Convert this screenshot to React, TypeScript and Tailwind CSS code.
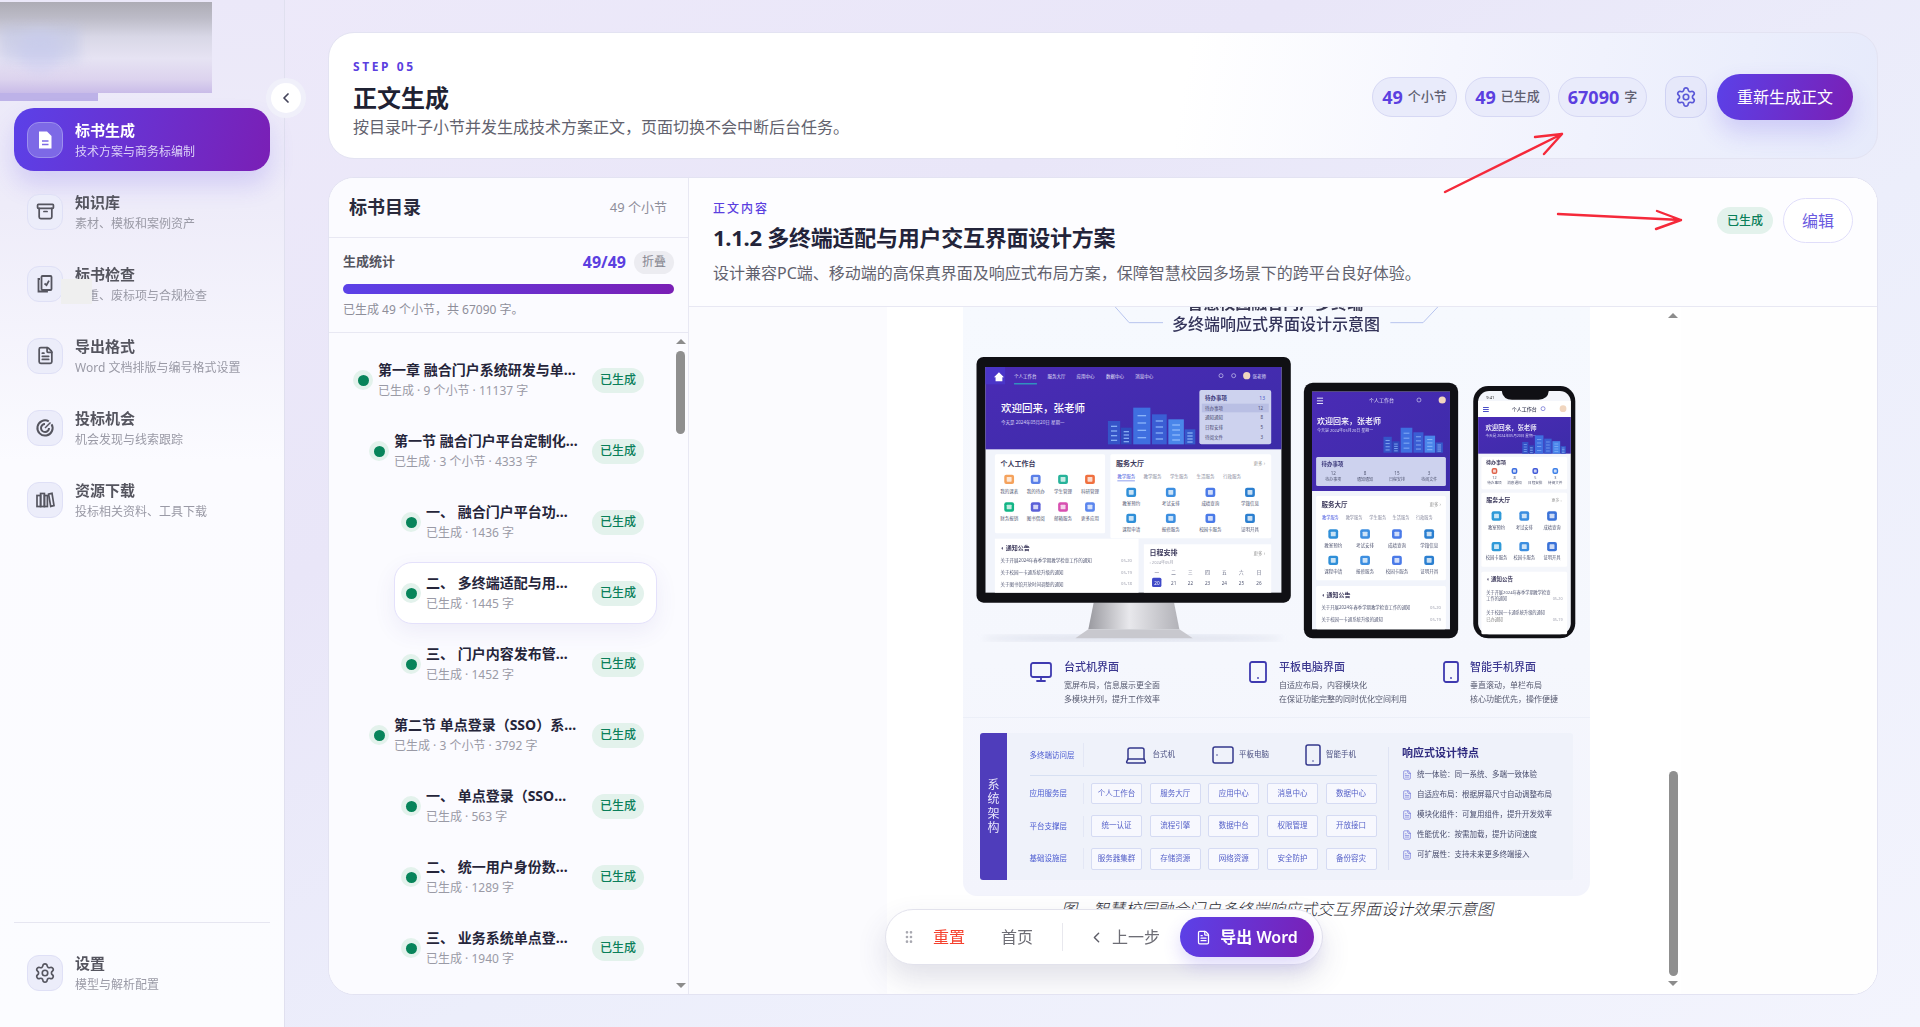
import React from "react";
import { Archive, ChevronLeft, GripVertical, Settings, FileText, Monitor, Tablet, Smartphone, Laptop } from "lucide-react";

const X = (z: number) => 960 + z / 2.45;
const Y = (z: number) => 300 + z / 3;

function R({ x, y, x2, y2, f, r = 0, o, s }: { x: number; y: number; x2: number; y2: number; f: string; r?: number; o?: number; s?: string }) {
  return <rect x={X(x)} y={Y(y)} width={(x2 - x) / 2.45} height={(y2 - y) / 3} rx={r} fill={f} opacity={o} stroke={s} strokeWidth={s ? 0.5 : undefined} />;
}
function T({ x, y, s, f = "#555a75", w, a = "start", children }: { x: number; y: number; s: number; f?: string; w?: number; a?: "start" | "middle" | "end"; children: React.ReactNode }) {
  return (
    <text x={X(x)} y={Y(y)} fontSize={s} fill={f} fontWeight={w} textAnchor={a} dominantBaseline="central">
      {children}
    </text>
  );
}
function Ico({ x, y, c, w = 24, h = 26 }: { x: number; y: number; c: string; w?: number; h?: number }) {
  return (
    <g>
      <R x={x - w / 2} y={y - h / 2} x2={x + w / 2} y2={y + h / 2} f={c} r={2} />
      <R x={x - w / 4} y={y - h / 4} x2={x + w / 4} y2={y + h / 4} f="#fff" o={0.75} r={0.6} />
    </g>
  );
}
function City({ x, y, k = 1 }: { x: number; y: number; k?: number }) {
  const b: [number, number, number, string][] = [
    [0, 70, 30, "#3554c8"], [32, 50, 26, "#2f49bd"], [62, 110, 42, "#3f6fe0"], [108, 90, 36, "#3a5ed4"], [148, 75, 38, "#4a86ea"], [188, 45, 26, "#3559cb"],
  ];
  return (
    <g>
      {b.map(([dx, h, w, c], i) => (
        <R key={i} x={x + dx * k} y={y - h * k} x2={x + (dx + w) * k} y2={y} f={c} />
      ))}
      {b.map(([dx, h, w], i) =>
        [0.2, 0.4, 0.6, 0.8].map((t) => <R key={`${i}-${t}`} x={x + (dx + w * 0.25) * k} y={y - h * k * t} x2={x + (dx + w * 0.75) * k} y2={y - h * k * t + 4 * k} f="#9cc4ff" o={0.8} />),
      )}
    </g>
  );
}

function Devices() {
  const H = "#3d3a5c";
  const mcols = [118, 183, 250, 316];
  const icons1 = [["#f5a25c", "#5a7fe8", "#27b39a", "#f0703f"], ["#12b585", "#5b60d8", "#d850b0", "#5b86ee"]];
  const labels1 = [["我的课表", "我的待办", "学生管理", "科研管理"], ["财务报销", "图书借阅", "邮箱服务", "更多应用"]];
  const svc = [["教室预约", "考试安排", "成绩查询", "学籍信息"], ["课程申请", "报修服务", "校园卡服务", "证明开具"]];
  return (
    <svg viewBox="962 306 627 344" width="627" height="344" className="block blur-[0.3px]">
      <defs>
        <linearGradient id="hero" x1="0" y1="0" x2="1" y2="1">
          <stop offset="0" stopColor="#4a2bb5" />
          <stop offset="1" stopColor="#3c2ca8" />
        </linearGradient>
        <linearGradient id="stand" x1="0" y1="0" x2="1" y2="0">
          <stop offset="0" stopColor="#9a9aa0" />
          <stop offset=".45" stopColor="#e8e8ec" />
          <stop offset="1" stopColor="#b2b2b8" />
        </linearGradient>
        <filter id="soft"><feGaussianBlur stdDeviation="3" /></filter>
      </defs>

      {/* heading */}
      <T x={770} y={5} s={16} f="#3a3a55" a="middle" w={700}>智慧校园融合门户多终端</T>
      <T x={772} y={70} s={16} f="#34345a" a="middle" w={500}>多终端响应式界面设计示意图</T>
      <polyline points={`${X(495)},${Y(65)} ${X(412)},${Y(65)} ${X(378)},${Y(18)}`} fill="none" stroke="#b7c4ee" strokeWidth="1" />
      <polyline points={`${X(1052)},${Y(65)} ${X(1132)},${Y(65)} ${X(1168)},${Y(18)}`} fill="none" stroke="#b7c4ee" strokeWidth="1" />

      {/* monitor */}
      <ellipse cx={X(420)} cy={Y(1012)} rx={150} ry={3} fill="#d9dde9" filter="url(#soft)" />
      <path d={`M${X(325)} ${Y(905)} H${X(522)} L${X(535)} ${Y(985)} H${X(312)} Z`} fill="url(#stand)" />
      <path d={`M${X(312)} ${Y(985)} H${X(535)} L${X(568)} ${Y(1012)} H${X(280)} Z`} fill="#c8c8ce" />
      <R x={38} y={168} x2={808} y2={905} f="#101014" r={7} />
      <R x={60} y={198} x2={785} y2={875} f="#f1f4fb" />
      <R x={60} y={198} x2={785} y2={445} f="url(#hero)" />
      <R x={60} y={198} x2={108} y2={250} f="#4a35c8" />
      <path d={`M${X(93)} ${Y(214)} l5 5 h-1.6 v4 h-6.8 v-4 h-1.6 z`} fill="#fff" />
      {["个人工作台", "服务大厅", "应用中心", "数据中心", "消息中心"].map((t, i) => (
        <T key={t} x={[130, 212, 283, 355, 427][i]} y={225} s={4.5} f="#e6e4fa">{t}</T>
      ))}
      <R x={130} y={247} x2={186} y2={250} f="#27c4c4" />
      <circle cx={X(637)} cy={Y(224)} r={2} fill="none" stroke="#e0e0f8" strokeWidth=".6" />
      <circle cx={X(668)} cy={Y(224)} r={2} fill="none" stroke="#e0e0f8" strokeWidth=".6" />
      <circle cx={X(700)} cy={Y(224)} r={3.6} fill="#f1d6bf" />
      <T x={714} y={225} s={4.5} f="#e6e4fa">张老师</T>
      <T x={98} y={320} s={10.5} f="#fff" w={500}>欢迎回来，张老师</T>
      <T x={98} y={362} s={4.5} f="#d8d6f6">今天是 2024年05月20日 星期一</T>
      <City x={360} y={430} />
      <R x={584} y={267} x2={760} y2={430} f="#cdd2ee" r={2} />
      <R x={590} y={308} x2={754} y2={334} f="#b9bfe4" />
      <T x={598} y={290} s={5.5} f="#3d3a7c" w={700}>待办事项</T>
      <T x={745} y={290} s={5} f="#4b55c8" a="end">13</T>
      {["待办事项", "通知通知", "日程安排", "待阅文件"].map((t, i) => (
        <g key={t}>
          <T x={598} y={[321, 349, 378, 407][i]} s={4.5} f="#4a4a72">{t}</T>
          <T x={740} y={[321, 349, 378, 407][i]} s={4.5} f="#4a4a72" a="end">{[12, 8, 5, 3][i]}</T>
        </g>
      ))}
      <R x={83} y={460} x2={353} y2={697} f="#fff" r={1.5} />
      <T x={97} y={487} s={7} f={H} w={700}>个人工作台</T>
      {[0, 1].map((row) =>
        mcols.map((cx, i) => (
          <g key={`${row}-${i}`}>
            <Ico x={cx} y={[535, 618][row]} c={icons1[row][i]} h={28} />
            <T x={cx} y={[569, 651][row]} s={4.5} a="middle">{labels1[row][i]}</T>
          </g>
        )),
      )}
      <R x={366} y={460} x2={760} y2={712} f="#fff" r={1.5} />
      <T x={380} y={487} s={7} f={H} w={700}>服务大厅</T>
      <T x={745} y={487} s={4.5} f="#999" a="end">更多 ›</T>
      {["教学服务", "教学服务", "学生服务", "生活服务", "行政服务"].map((t, i) => (
        <T key={i} x={[383, 447, 512, 577, 642][i]} y={525} s={4.5} f={i === 0 ? "#4a5ae0" : "#8a8ca0"}>{t}</T>
      ))}
      <R x={383} y={538} x2={426} y2={541} f="#8fa0ee" />
      {[0, 1].map((row) =>
        [417, 514, 611, 708].map((cx, i) => (
          <g key={`s${row}-${i}`}>
            <Ico x={cx} y={[574, 652][row]} c={["#2f8fd8", "#3c8ee0", "#4a7ae8", "#2b7fd0"][i]} h={28} />
            <T x={cx} y={[605, 684][row]} s={4.5} a="middle">{svc[row][i]}</T>
          </g>
        )),
      )}
      <R x={83} y={713} x2={435} y2={875} f="#fff" />
      <T x={97} y={740} s={6} f={H} w={700}>◖ 通知公告</T>
      {["关于开展2024年春季学期教学检查工作的通知", "关于校园一卡通系统升级的通知", "关于图书馆开放时间调整的通知"].map((t, i) => (
        <g key={t}>
          <T x={97} y={[777, 813, 848][i]} s={4.5}>{t}</T>
          <T x={392} y={[777, 813, 848][i]} s={4.2} f="#a0a2b0">{["05-20", "05-19", "05-18"][i]}</T>
        </g>
      ))}
      <R x={448} y={730} x2={760} y2={875} f="#fff" />
      <T x={462} y={755} s={7} f={H} w={700}>日程安排</T>
      <T x={745} y={755} s={4.5} f="#999" a="end">更多 ›</T>
      <T x={462} y={784} s={4} f="#a0a2b0">‹ 2024年05月</T>
      {["一", "二", "三", "四", "五", "六", "日"].map((t, i) => (
        <T key={t} x={[480, 521, 562, 604, 645, 687, 730][i]} y={813} s={4.6} a="middle">{t}</T>
      ))}
      <R x={468} y={830} x2={491} y2={858} f="#3f49c8" r={1.5} />
      {[20, 21, 22, 23, 24, 25, 26].map((t, i) => (
        <T key={t} x={[480, 521, 562, 604, 645, 687, 730][i]} y={845} s={4.6} a="middle" f={i === 0 ? "#fff" : "#555a75"}>{t}</T>
      ))}

      {/* tablet */}
      <R x={840} y={245} x2={1218} y2={1012} f="#101014" r={9} />
      <R x={860} y={272} x2={1198} y2={985} f="#f1f4fb" />
      <R x={860} y={272} x2={1198} y2={570} f="url(#hero)" />
      {[290, 298, 306].map((yy) => <R key={yy} x={872} y={yy} x2={887} y2={yy + 3} f="#e0e0f8" />)}
      <T x={1030} y={298} s={5} f="#e6e4fa" a="middle">个人工作台</T>
      <circle cx={X(1122)} cy={Y(297)} r={2} fill="none" stroke="#e0e0f8" strokeWidth=".6" />
      <circle cx={X(1179)} cy={Y(297)} r={3.6} fill="#f1d6bf" />
      <T x={872} y={357} s={8} f="#fff" w={500}>欢迎回来，张老师</T>
      <T x={872} y={388} s={4} f="#d8d6f6">今天是 2024年05月20日 星期一</T>
      <City x={1035} y={455} k={0.68} />
      <R x={870} y={468} x2={1188} y2={555} f="#cdd2ee" r={1.5} />
      <T x={883} y={490} s={5.5} f="#3d3a7c" w={700}>待办事项</T>
      {["12", "8", "15", "3"].map((t, i) => (
        <g key={i}>
          <T x={[912, 990, 1068, 1147][i]} y={516} s={4.5} a="middle">{t}</T>
          <T x={[912, 990, 1068, 1147][i]} y={536} s={4} a="middle">{["待办事项", "通知通知", "日程安排", "待阅文件"][i]}</T>
        </g>
      ))}
      <R x={870} y={585} x2={1188} y2={838} f="#fff" r={1.5} />
      <T x={883} y={609} s={6.5} f={H} w={700}>服务大厅</T>
      <T x={1176} y={609} s={4.5} f="#999" a="end">更多 ›</T>
      {["教学服务", "教学服务", "学生服务", "生活服务", "行政服务"].map((t, i) => (
        <T key={i} x={[905, 963, 1021, 1078, 1135][i]} y={648} s={4.2} a="middle" f={i === 0 ? "#4a5ae0" : "#8a8ca0"}>{t}</T>
      ))}
      {[0, 1].map((row) =>
        [912, 990, 1068, 1147].map((cx, i) => (
          <g key={`t${row}-${i}`}>
            <Ico x={cx} y={[699, 778][row]} c={["#2f8fd8", "#3c8ee0", "#4a7ae8", "#2b7fd0"][i]} h={28} />
            <T x={cx} y={[731, 810][row]} s={4.5} a="middle">{svc[row][i]}</T>
          </g>
        )),
      )}
      <R x={870} y={855} x2={1188} y2={985} f="#fff" r={1.5} />
      <T x={883} y={881} s={6} f={H} w={700}>◖ 通知公告</T>
      <T x={883} y={918} s={4.4}>关于开展2024年春季学期教学检查工作的通知</T>
      <T x={883} y={954} s={4.4}>关于校园一卡通系统升级的通知</T>
      <T x={1176} y={918} s={4.2} f="#a0a2b0" a="end">05-20</T>
      <T x={1176} y={954} s={4.2} f="#a0a2b0" a="end">05-19</T>

      {/* phone */}
      <R x={1255} y={255} x2={1505} y2={1012} f="#101014" r={15} />
      <R x={1267} y={270} x2={1494} y2={1000} f="#f4f6fb" r={11} />
      <path d={`M${X(1325)} ${Y(270)} H${X(1440)} Q${X(1438)} ${Y(296)} ${X(1415)} ${Y(296)} H${X(1350)} Q${X(1327)} ${Y(296)} ${X(1325)} ${Y(270)} Z`} fill="#101014" />
      <T x={1287} y={288} s={4} f="#222">9:41</T>
      <R x={1267} y={300} x2={1494} y2={348} f="#fff" />
      {[318, 324, 330].map((yy) => <R key={yy} x={1279} y={yy} x2={1293} y2={yy + 3} f="#4a4fc8" />)}
      <T x={1380} y={324} s={5} f="#33354f" a="middle" w={500}>个人工作台</T>
      <circle cx={X(1426)} cy={Y(323)} r={2} fill="none" stroke="#4a4fc8" strokeWidth=".6" />
      <circle cx={X(1475)} cy={Y(323)} r={3.4} fill="#f1d6bf" />
      <R x={1267} y={348} x2={1494} y2={458} f="url(#hero)" />
      <T x={1285} y={380} s={6.4} f="#fff" w={500}>欢迎回来，张老师</T>
      <T x={1285} y={404} s={3.6} f="#d8d6f6">今天是 2024年05月20日 星期一</T>
      <City x={1375} y={458} k={0.5} />
      <R x={1275} y={468} x2={1485} y2={565} f="#fff" r={1.5} />
      <T x={1286} y={482} s={5} f={H} w={700}>待办事项</T>
      {[1307, 1356, 1407, 1456].map((cx, i) => (
        <g key={cx}>
          <Ico x={cx} y={510} c={["#e0644c", "#3c6ee0", "#3f58d8", "#3c7fe8"][i]} w={14} h={18} />
          <T x={cx} y={529} s={3.8} a="middle">{["12", "8", "5", "3"][i]}</T>
          <T x={cx} y={543} s={3.6} a="middle">{["待办事项", "消息通知", "日程安排", "待阅文件"][i]}</T>
        </g>
      ))}
      <R x={1275} y={575} x2={1485} y2={797} f="#fff" r={1.5} />
      <T x={1287} y={598} s={6} f={H} w={700}>服务大厅</T>
      <T x={1472} y={598} s={4} f="#999" a="end">更多 ›</T>
      {[0, 1].map((row) =>
        [1312, 1380, 1448].map((cx, i) => (
          <g key={`p${row}-${i}`}>
            <Ico x={cx} y={[645, 737][row]} c={["#2f9ad8", "#3c8ee0", "#3a72d8"][i]} h={28} />
            <T x={cx} y={[677, 769][row]} s={4.3} a="middle">{[["教室预约", "考试安排", "成绩查询"], ["校园卡服务", "校园卡服务", "证明开具"]][row][i]}</T>
          </g>
        )),
      )}
      <R x={1275} y={812} x2={1485} y2={1000} f="#fff" r={1.5} />
      <T x={1287} y={834} s={5.5} f={H} w={700}>◖ 通知公告</T>
      <T x={1287} y={873} s={4.2}>关于开展2024年春季学期教学检查</T>
      <T x={1287} y={893} s={4.2}>工作的通知</T>
      <T x={1287} y={935} s={4.2}>关于校园一卡通系统升级的通知</T>
      <T x={1287} y={955} s={4.2} f="#888">已办通知</T>
      <T x={1474} y={893} s={3.8} f="#a0a2b0" a="end">05-20</T>
      <T x={1474} y={955} s={3.8} f="#a0a2b0" a="end">05-19</T>
    </svg>
  );
}

function DeviceNote({ icon, w, gap, title, lines }: { icon: React.ReactNode; w: string; gap: string; title: string; lines: string[] }) {
  return (
    <div className={`flex ${gap} ${w}`}>
      <div className="mt-[-1px] flex w-[24px] justify-center text-[#3f3ab0]">{icon}</div>
      <div>
        <div className="text-[11px] leading-[16px] font-medium text-[#3c3890]">{title}</div>
        <div className="mt-[3px] text-[8px] leading-[13.5px] whitespace-nowrap text-[#55586e]">
          {lines.map((l) => (
            <div key={l}>{l}</div>
          ))}
        </div>
      </div>
    </div>
  );
}

function Chip({ t }: { t: string }) {
  return <div className="flex h-[21.5px] items-center justify-center rounded-[2px] border border-[#d5dbf3] bg-[#f7f8fe] text-[7.5px] whitespace-nowrap text-[#5560c8]">{t}</div>;
}

function Architecture() {
  const rows = [
    ["应用服务层", "个人工作台", "服务大厅", "应用中心", "消息中心", "数据中心"],
    ["平台支撑层", "统一认证", "流程引擎", "数据中台", "权限管理", "开放接口"],
    ["基础设施层", "服务器集群", "存储资源", "网络资源", "安全防护", "备份容灾"],
  ];
  const feats = ["统一体验：同一系统、多端一致体验", "自适应布局：根据屏幕尺寸自动调整布局", "模块化组件：可复用组件，提升开发效率", "性能优化：按需加载，提升访问速度", "可扩展性：支持未来更多终端接入"];
  return (
    <div className="mx-[17px] flex h-[147px] overflow-hidden rounded-[3px] bg-[#eff2fa]">
      <div className="flex w-[27px] shrink-0 flex-col items-center justify-center bg-[#4f3dbb] text-[12px] leading-[14.3px] text-[#e8e6fb]">
        <span>系</span>
        <span>统</span>
        <span>架</span>
        <span>构</span>
      </div>
      <div className="w-[370px] shrink-0 pt-[10px] pl-[22.6px]">
        <div className="flex h-[24px] items-center whitespace-nowrap">
          <div className="w-[54px] border-r border-[#e3e7f5] text-[7.5px] leading-[24px] text-[#4a5ad0]">多终端访问层</div>
          <div className="ml-[40px] flex items-center gap-[5px] text-[7.5px] text-[#4a4f80]">
            <Laptop size={24} strokeWidth={1.5} className="text-[#34388c]" />
            台式机
          </div>
          <div className="ml-[36px] flex items-center gap-[4px] text-[7.5px] text-[#4a4f80]">
            <Tablet size={24} strokeWidth={1.5} className="rotate-90 text-[#34388c]" />
            平板电脑
          </div>
          <div className="ml-[32px] flex items-center gap-[1px] text-[7.5px] text-[#4a4f80]">
            <Smartphone size={24} strokeWidth={1.5} className="text-[#34388c]" />
            智能手机
          </div>
        </div>
        <div className="mt-[7.5px] mb-[7px] h-px w-[347px] bg-[#d7e0f2]" />
        <div className="flex w-[347px] flex-col gap-[11.3px]">
          {rows.map((r) => (
            <div key={r[0]} className="flex items-center">
              <div className="w-[54.4px] shrink-0 border-r border-[#e3e7f5] text-[7.5px] leading-[21px] whitespace-nowrap text-[#4a5ad0]">{r[0]}</div>
              <div className="ml-[7px] grid flex-1 grid-cols-5 gap-[7.6px]">
                {r.slice(1).map((c) => (
                  <Chip key={c} t={c} />
                ))}
              </div>
            </div>
          ))}
        </div>
      </div>
      <div className="mt-[14px] mb-[10px] ml-[11px] flex-1 border-l border-[#dfe4f3] pl-[13px]">
        <div className="text-[11px] leading-[12px] font-bold text-[#2f2b80]">响应式设计特点</div>
        <div className="mt-[10px] flex flex-col gap-[8px]">
          {feats.map((f) => (
            <div key={f} className="flex h-[12px] items-center gap-[5px] text-[7.5px] whitespace-nowrap text-[#484c6c]">
              <FileText size={10} strokeWidth={1.3} className="text-[#4a50d0]" />
              {f}
            </div>
          ))}
        </div>
      </div>
    </div>
  );
}

function Triangle({ down }: { down?: boolean }) {
  return <div className={down ? "h-0 w-0 border-x-[5px] border-t-[5px] border-x-transparent border-t-[#8c8c8c]" : "h-0 w-0 border-x-[5px] border-b-[5px] border-x-transparent border-b-[#8c8c8c]"} />;
}

const navItems = [
  { t: "知识库", s: "素材、模板和案例资产", i: <Archive size={19} strokeWidth={2.2} /> },
  {
    t: "标书检查",
    s: "权重、废标项与合规检查",
    i: (
      <svg width="20" height="20" viewBox="0 0 20 20" fill="none" stroke="currentColor" strokeWidth="1.8">
        <path d="M5 5H3.5v12.5H12V17" />
        <rect x="6.5" y="2" width="10" height="14" rx="1" />
        <path d="M9.5 9.5l2 1.6 2.5-4.5" />
      </svg>
    ),
  },
  { t: "导出格式", s: "Word 文档排版与编号格式设置", i: <FileText size={19} strokeWidth={2.2} /> },
  {
    t: "投标机会",
    s: "机会发现与线索跟踪",
    i: (
      <svg width="20" height="20" viewBox="0 0 20 20" fill="none" stroke="currentColor" strokeWidth="2">
        <path d="M16.6 6.2A7.6 7.6 0 1 1 13.8 3.4" />
        <path d="M14 9.9A4 4 0 1 1 10 6" />
        <path d="M10 10l5.5-5.5" strokeWidth="1.4" />
      </svg>
    ),
  },
  {
    t: "资源下载",
    s: "投标相关资料、工具下载",
    i: (
      <svg width="20" height="20" viewBox="0 0 20 20" fill="none" stroke="currentColor" strokeWidth="1.7">
        <rect x="2" y="5.5" width="3.6" height="11" />
        <rect x="5.6" y="3.5" width="3.8" height="13" />
        <rect x="9.4" y="5.5" width="3" height="11" />
        <path d="M13.6 4.2l3.4-.8 2 12.2-3.3.8z" />
      </svg>
    ),
  },
];

function NavRow({ t, s, i, patch }: { t: string; s: string; i: React.ReactNode; patch?: boolean }) {
  return (
    <div className="relative mx-[14px] flex h-[63px] items-center gap-[12px] pl-[13px]">
      <div className="flex h-[36px] w-[36px] items-center justify-center rounded-[12px] border border-[#dfe0f6] bg-[#ecedfa] text-[#55555f]">{i}</div>
      <div>
        <div className="text-[15px] leading-[20px] font-bold text-[#55555f]">{t}</div>
        <div className="mt-[4px] text-[12px] leading-[16px] text-[#9a9aa6]">{s}</div>
      </div>
      {patch && <div className="absolute top-[27px] left-[47px] h-[25px] w-[31px] bg-[#efefef]" />}
    </div>
  );
}

function Logo() {
  return (
    <div className="h-[108px] pt-[2px]">
      <div className="relative h-[91px] w-[212px] overflow-hidden bg-[linear-gradient(180deg,#adacb5_0%,#bdbcc8_18%,#d8d7e6_38%,#e6e3f3_62%,#dcd3ee_85%,#c9bce8_100%)]">
        <div className="absolute top-[28px] left-[18px] h-[44px] w-[44px] rounded-full bg-[#d2d2f2] opacity-60 blur-[6px]" />
        <div className="absolute top-[24px] left-0 h-[36px] w-[80px] bg-[#b8c0e6] opacity-40 blur-[6px]" />
      </div>
      <div className="h-[8px] w-[98px] bg-[#bdb2e8]" />
    </div>
  );
}

function Sidebar() {
  return (
    <aside className="relative z-10 flex h-full w-[285px] shrink-0 flex-col border-r border-[#e0e0ef] bg-[linear-gradient(180deg,#ebe8f9_0%,#eeecf9_20%,#fbfbff_45%,#fbfcff_100%)]">
      <Logo />
      <div className="flex flex-col gap-[9px]">
        <div className="mx-[14px] flex h-[63px] items-center gap-[12px] rounded-[20px] bg-[linear-gradient(105deg,#5b41e8,#7a1fb5)] pl-[13px] shadow-[0_14px_24px_rgba(91,65,232,0.18)]">
          <div className="flex h-[36px] w-[36px] items-center justify-center rounded-[12px] border border-[#9d90ee] bg-[#7d69e6]">
            <svg width="20" height="20" viewBox="0 0 20 20">
              <path d="M4 1.5h8l4.5 4.5v12.5H4z" fill="#fff" />
              <path d="M7 11h6.5M7 14.5h6.5" stroke="#7d69e6" strokeWidth="1.5" />
            </svg>
          </div>
          <div>
            <div className="text-[15px] leading-[20px] font-bold text-white">标书生成</div>
            <div className="mt-[4px] text-[12px] leading-[16px] text-[#dcd2f8]">技术方案与商务标编制</div>
          </div>
        </div>
        {navItems.map((n, idx) => (
          <NavRow key={n.t} {...n} patch={idx === 1} />
        ))}
      </div>
      <div className="flex-1" />
      <div className="mx-[14px] h-px bg-[#e6e6f1]" />
      <div className="mt-[18px] mb-[23px]">
        <NavRow t="设置" s="模型与解析配置" i={<Settings size={22} strokeWidth={1.8} />} />
      </div>
      <div className="absolute top-[83px] left-[271px] flex h-[30px] w-[30px] items-center justify-center rounded-full bg-white text-[#44445a] shadow-[0_0_0_5px_rgba(240,240,250,0.95)]">
        <ChevronLeft size={16} strokeWidth={2.6} />
      </div>
    </aside>
  );
}

function Pill({ n, u, w }: { n: string; u: string; w: string }) {
  return (
    <div className={`flex h-[40px] ${w} items-center justify-center gap-[5px] rounded-full border border-[#d6d8f4] bg-[#e9ebfb] whitespace-nowrap`}>
      <span className="text-[18px] font-bold text-[#5b3fe0]">{n}</span>
      <span className="text-[13px] font-medium text-[#606070]">{u}</span>
    </div>
  );
}

function HeaderCard() {
  return (
    <section className="flex h-[127px] shrink-0 items-start justify-between rounded-[26px] border border-[#e3e3f2] bg-[linear-gradient(100deg,#ffffff_55%,#f5f6fe_72%,#e6eafb_100%)] pr-[24px] pl-[24px]">
      <div className="flex flex-col pt-[26px]">
        <div className="text-[12px] leading-[16px] font-bold tracking-[2.6px] text-[#5b3fe0]">STEP 05</div>
        <div className="mt-[7px] text-[24px] leading-[32px] font-bold text-[#1f2233]">正文生成</div>
        <div className="mt-[1px] text-[16px] leading-[24px] text-[#62626e]">按目录叶子小节并发生成技术方案正文，页面切换不会中断后台任务。</div>
      </div>
      <div className="flex items-center pt-[41px]">
        <div className="flex gap-[8px]">
          <Pill n="49" u="个小节" w="w-[85px]" />
          <Pill n="49" u="已生成" w="w-[85px]" />
          <Pill n="67090" u="字" w="w-[89px]" />
        </div>
        <div className="ml-[18px] flex h-[42px] w-[42px] items-center justify-center rounded-[14px] border border-[#cfd2f3] bg-[#e6e8fa] text-[#5a58d8]">
          <Settings size={22} strokeWidth={1.8} />
        </div>
        <div className="ml-[10px] flex h-[46px] w-[136px] items-center justify-center rounded-full bg-[linear-gradient(105deg,#5b41e8,#7a1fb5)] text-[16px] text-white shadow-[0_12px_24px_rgba(91,65,232,0.2)]">重新生成正文</div>
      </div>
    </section>
  );
}

type Item = { l: 1 | 2 | 3; t: string; s: string; a?: boolean };
const items: Item[] = [
  { l: 1, t: "第一章 融合门户系统研发与单点登录实施方案", s: "已生成 · 9 个小节 · 11137 字" },
  { l: 2, t: "第一节 融合门户平台定制化开发与集成", s: "已生成 · 3 个小节 · 4333 字" },
  { l: 3, t: "一、 融合门户平台功能架构设计", s: "已生成 · 1436 字" },
  { l: 3, t: "二、 多终端适配与用户交互界面设计方案", s: "已生成 · 1445 字", a: true },
  { l: 3, t: "三、 门户内容发布管理机制", s: "已生成 · 1452 字" },
  { l: 2, t: "第二节 单点登录（SSO）系统建设方案", s: "已生成 · 3 个小节 · 3792 字" },
  { l: 3, t: "一、 单点登录（SSO）认证架构", s: "已生成 · 563 字" },
  { l: 3, t: "二、 统一用户身份数据管理", s: "已生成 · 1289 字" },
  { l: 3, t: "三、 业务系统单点登录对接", s: "已生成 · 1940 字" },
];

function TocRow({ l, t, s, a }: Item) {
  const ml = l === 1 ? "ml-[17px]" : l === 2 ? "ml-[33px]" : "ml-[65px]";
  const box = a ? "border border-[#e4e1fb] bg-white shadow-[0_8px_22px_rgba(80,70,160,0.08)]" : "border border-transparent";
  return (
    <div className={`flex h-[62px] items-center rounded-[18px] pr-[12px] pl-[6px] ${ml} ${box}`}>
      <div className="flex h-[20px] w-[20px] shrink-0 items-center justify-center rounded-full bg-[#e3f2ec]">
        <div className="h-[11px] w-[11px] rounded-full bg-[#07845a]" />
      </div>
      <div className="ml-[5px] min-w-0 flex-1 pb-[1px]">
        <div className="truncate text-[14px] leading-[20px] font-bold text-[#25253a]">{t}</div>
        <div className="mt-[2px] truncate text-[12px] leading-[17px] text-[#9a9aa6]">{s}</div>
      </div>
      <div className="ml-[14px] flex h-[25px] w-[52px] shrink-0 items-center justify-center rounded-full bg-[#e3f2ec] text-[12px] font-medium text-[#0a7f5a]">已生成</div>
    </div>
  );
}

function LeftPanel() {
  return (
    <div className="flex h-full w-[360px] shrink-0 flex-col border-r border-[#e8e8f3] bg-[#fbfbff]">
      <div className="flex h-[60px] shrink-0 items-center justify-between border-b border-[#e8e8f3] pr-[21px] pl-[20px]">
        <div className="text-[18px] font-bold text-[#2a2a3c]">标书目录</div>
        <div className="text-[13px] text-[#8e8e9a]">49 个小节</div>
      </div>
      <div className="h-[95px] shrink-0 border-b border-[#e8e8f3] pt-[12px] pr-[14px] pl-[14px]">
        <div className="flex items-center">
          <div className="flex-1 text-[13px] font-bold text-[#55555f]">生成统计</div>
          <div className="text-[16px] font-bold text-[#5b3fe0]">49/49</div>
          <div className="ml-[8px] flex h-[23px] w-[40px] items-center justify-center rounded-full bg-[#ececf1] text-[12px] text-[#85858f]">折叠</div>
        </div>
        <div className="mt-[10px] h-[10px] rounded-full bg-[linear-gradient(90deg,#5b41e8,#7a1fb5)]" />
        <div className="mt-[8px] text-[12px] leading-[16px] text-[#8e8e9a]">已生成 49 个小节，共 67090 字。</div>
      </div>
      <div className="flex min-h-0 flex-1 overflow-hidden">
        <div className="min-w-0 flex-1 pt-[16px] pr-[16px]">
          <div className="flex flex-col gap-[9px]">
            {items.map((it) => (
              <TocRow key={it.t} {...it} />
            ))}
          </div>
        </div>
        <div className="flex w-[15px] shrink-0 flex-col items-center pt-[6px] pb-[6px]">
          <Triangle />
          <div className="mt-[7px] h-[83px] w-[9px] rounded-full bg-[#8f8f8f]" />
          <div className="flex-1" />
          <Triangle down />
        </div>
      </div>
    </div>
  );
}

function Toolbar() {
  return (
    <div className="absolute bottom-[29px] left-[196px] flex h-[56px] w-[438px] items-center rounded-full border border-[#e2e2ec] bg-white shadow-[0_14px_30px_rgba(60,60,110,0.16)]">
      <GripVertical size={16} className="ml-[15px] text-[#a8a8b0]" />
      <div className="ml-[16px] text-[16px] text-[#f5412e]">重置</div>
      <div className="ml-[36px] text-[16px] text-[#6d6d75]">首页</div>
      <div className="ml-[29px] h-[28px] w-px bg-[#e8e8ee]" />
      <ChevronLeft size={17} strokeWidth={2} className="ml-[25px] text-[#5e5e68]" />
      <div className="ml-[7px] text-[16px] text-[#6d6d75]">上一步</div>
      <div className="ml-[20px] flex h-[40px] w-[134px] items-center justify-center gap-[9px] rounded-full bg-[linear-gradient(105deg,#5b41e8,#7a1fb5)] text-[16px] font-semibold text-white shadow-[0_8px_18px_rgba(91,65,232,0.2)]">
        <FileText size={15} strokeWidth={2} />
        导出 Word
      </div>
    </div>
  );
}

function RightPanel() {
  return (
    <div className="relative flex h-full min-w-0 flex-1 flex-col bg-white">
      <div className="flex h-[129px] shrink-0 justify-between border-b border-[#e8e8f3] bg-[#fdfdff] pr-[24px] pl-[24px]">
        <div className="pt-[23px]">
          <div className="text-[12px] leading-[16px] font-medium tracking-[2px] text-[#5b3fe0]">正文内容</div>
          <div className="mt-[5px] text-[22px] leading-[30px] font-bold tracking-[-0.25px] text-[#23243a]">1.1.2 多终端适配与用户交互界面设计方案</div>
          <div className="mt-[9px] text-[16px] leading-[24px] text-[#62626e]">设计兼容PC端、移动端的高保真界面及响应式布局方案，保障智慧校园多场景下的跨平台良好体验。</div>
        </div>
        <div className="mt-[20px] flex h-[45px] items-center gap-[10px] self-start">
          <div className="flex h-[27px] w-[56px] items-center justify-center rounded-full bg-[#e3f2ec] text-[12px] font-medium text-[#0a7f5a]">已生成</div>
          <div className="flex h-[45px] w-[70px] items-center justify-center rounded-full border border-[#e0defa] bg-white text-[16px] text-[#6a5ae0]">编辑</div>
        </div>
      </div>
      <div className="flex min-h-0 flex-1 overflow-hidden">
        <div className="w-[198px] shrink-0 bg-[#fbfbfe]" />
        <div className="w-[778px] shrink-0">
          <div className="mx-[76px] w-[627px] rounded-b-[14px] bg-[linear-gradient(180deg,#f6f9fe_0%,#f5f7fd_60%,#f3f4fc_100%)]">
            <Devices />
            <div className="blur-[0.25px]">
              <div className="flex h-[67px] border-b border-[#eceff8] pt-[8px] pl-[66px]">
                <DeviceNote w="w-[217px]" gap="gap-[11px]" icon={<Monitor size={28} strokeWidth={1.8} />} title="台式机界面" lines={["宽屏布局，信息展示更全面", "多模块并列，提升工作效率"]} />
                <DeviceNote w="w-[193px]" gap="gap-[9px]" icon={<Tablet size={28} strokeWidth={1.8} />} title="平板电脑界面" lines={["自适应布局，内容模块化", "在保证功能完整的同时优化空间利用"]} />
                <DeviceNote w="w-[120px]" gap="gap-[7px]" icon={<Smartphone size={28} strokeWidth={1.8} />} title="智能手机界面" lines={["垂直滚动，单栏布局", "核心功能优先，操作便捷"]} />
              </div>
              <div className="h-[15px]" />
              <Architecture />
              <div className="h-[16px]" />
            </div>
          </div>
          <div className="mt-[1px] pl-[174px] text-[16px] leading-[24px] font-light whitespace-nowrap text-[#2c2c34] italic">图。智慧校园融合门户多终端响应式交互界面设计效果示意图</div>
        </div>
        <div className="flex w-[16px] shrink-0 flex-col items-center pt-[6px] pb-[8px]">
          <Triangle />
          <div className="mt-[453px] h-[205px] w-[9px] rounded-full bg-[#8f8f8f]" />
          <div className="flex-1" />
          <Triangle down />
        </div>
        <div className="flex-1 bg-[#fefefe]" />
      </div>
      <Toolbar />
    </div>
  );
}

export default function App() {
  return (
    <div className="relative flex h-screen w-full overflow-hidden bg-[linear-gradient(150deg,#eeeafa_0%,#e9e6f8_35%,#eceefb_60%,#f3f4fd_100%)] font-['Noto_Sans','Noto_Sans_CJK_SC',sans-serif]">
      <Sidebar />
      <main className="flex h-full min-w-0 flex-1 flex-col gap-[18px] pt-[32px] pr-[42px] pb-[32px] pl-[43px]">
        <HeaderCard />
        <section className="flex min-h-0 flex-1 overflow-hidden rounded-[26px] border border-[#e3e3f2] bg-white">
          <LeftPanel />
          <RightPanel />
        </section>
      </main>
      <svg className="pointer-events-none absolute top-0 left-0 h-[1027px] w-[1920px]" viewBox="0 0 1920 1027" fill="none" stroke="#f5293a" strokeWidth="2.4" strokeLinecap="round" strokeLinejoin="round">
        <path d="M1445 192 L1562 134 M1535 137 L1562 134 L1544 154" />
        <path d="M1558 214 L1681 220 M1657 211 L1681 220 L1656 229" />
      </svg>
    </div>
  );
}
